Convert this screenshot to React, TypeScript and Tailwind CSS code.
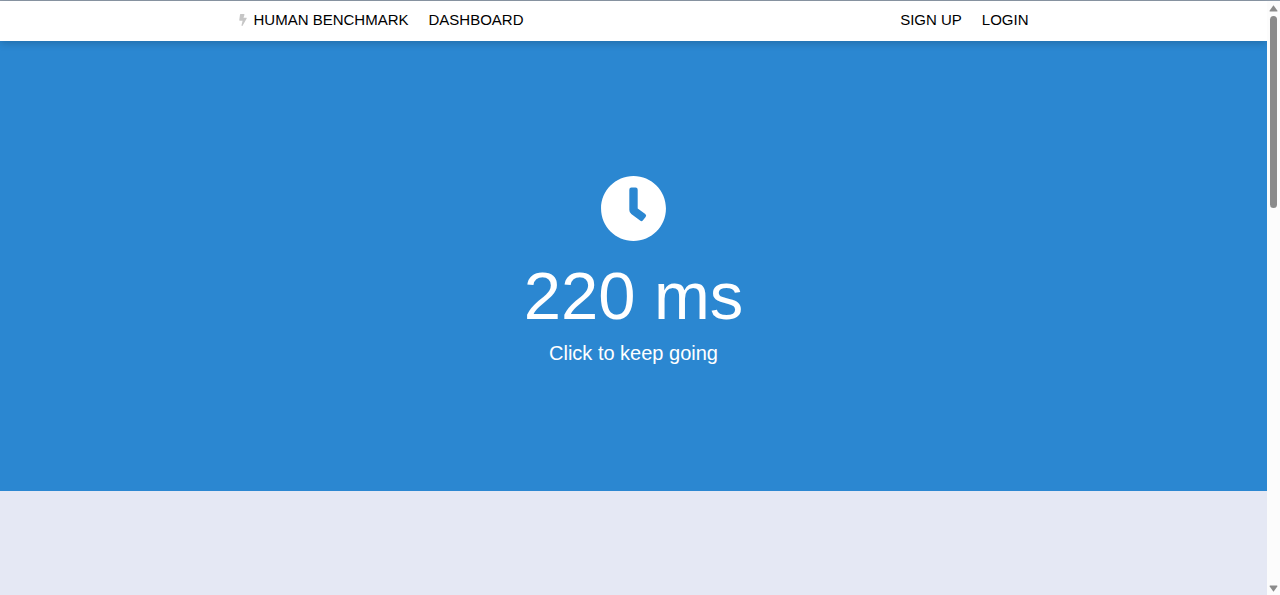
import { useState } from 'react'

const links = {
  left: [{ label: 'DASHBOARD', href: '#dashboard' }],
  right: [
    { label: 'SIGN UP', href: '#signup' },
    { label: 'LOGIN', href: '#login' },
  ],
}

function BoltIcon() {
  return (
    <svg viewBox="0 0 320 512" className="h-3 w-2 shrink-0 fill-[#c6c6c6]" aria-hidden="true">
      <path d="M296 160H180.6l42.6-129.8C227.2 15 215.7 0 200 0H56C44 0 33.8 8.9 32.2 20.8l-32 240C-1.7 275.2 9.5 288 24 288h118.7L96.6 482.5c-3.6 15.2 8 29.5 23.3 29.5 8.4 0 16.4-4.4 20.8-12l176-304c9.3-15.9-2.2-36-20.7-36z" />
    </svg>
  )
}

function ClockIcon() {
  return (
    <svg viewBox="0 0 512 512" className="size-[67px] fill-white" aria-hidden="true">
      <path d="M256,8C119,8,8,119,8,256S119,504,256,504,504,393,504,256,393,8,256,8Zm92.49,313h0l-20,25a16,16,0,0,1-22.49,2.5h0l-67-49.72a40,40,0,0,1-15-31.23V112a16,16,0,0,1,16-16h32a16,16,0,0,1,16,16V256l58,42.5A16,16,0,0,1,348.49,321Z" />
    </svg>
  )
}

function Header() {
  return (
    <header className="relative bg-white shadow-[0_2px_8px_rgba(0,0,0,0.2)]">
      <nav className="mx-auto flex h-10 max-w-[810px] items-start justify-between text-[15px] leading-[38px] text-black">
        <div className="flex">
          <a href="#home" className="flex items-center gap-[7px] px-[10px]">
            <BoltIcon />
            HUMAN BENCHMARK
          </a>
          {links.left.map((link) => (
            <a key={link.label} href={link.href} className="px-[10px]">
              {link.label}
            </a>
          ))}
        </div>
        <div className="flex">
          {links.right.map((link) => (
            <a key={link.label} href={link.href} className="px-[10px]">
              {link.label}
            </a>
          ))}
        </div>
      </nav>
    </header>
  )
}

function ReactionTest() {
  const [time] = useState(220)

  return (
    <button
      type="button"
      className="flex h-[450px] w-full flex-col items-center bg-[#2b87d1] pt-[134px] text-white"
    >
      <ClockIcon />
      <span className="mt-3.5 text-[67px] leading-[80px]">{time} ms</span>
      <span className="mt-[3px] text-xl leading-7">Click to keep going</span>
    </button>
  )
}

function ScrollTrack() {
  return (
    <div className="relative flex w-[13px] shrink-0 flex-col items-center bg-[#fcfcfc] pt-1 pb-[3px]" aria-hidden="true">
      <svg viewBox="0 0 9 7" className="h-[7px] w-[9px] fill-[#8b8b8b]">
        <path d="M4.5 0.3 8.3 5.4Q8.8 6.6 7.8 6.6H1.2Q0.2 6.6 0.7 5.4Z" />
      </svg>
      <div className="mt-1 h-48 w-[7px] rounded-full bg-[#8b8b8b]" />
      <svg viewBox="0 0 9 7" className="mt-auto h-[7px] w-[9px] fill-[#8b8b8b]">
        <path d="M4.5 6.7 8.3 1.6Q8.8 0.4 7.8 0.4H1.2Q0.2 0.4 0.7 1.6Z" />
      </svg>
    </div>
  )
}

function App() {
  return (
    <div className="flex min-h-screen border-t border-[#8e9baa] bg-[#e5e8f4] font-['Liberation_Sans',Arial,sans-serif]">
      <div className="min-w-0 flex-1">
        <Header />
        <main>
          <ReactionTest />
        </main>
      </div>
      <ScrollTrack />
    </div>
  )
}

export default App
